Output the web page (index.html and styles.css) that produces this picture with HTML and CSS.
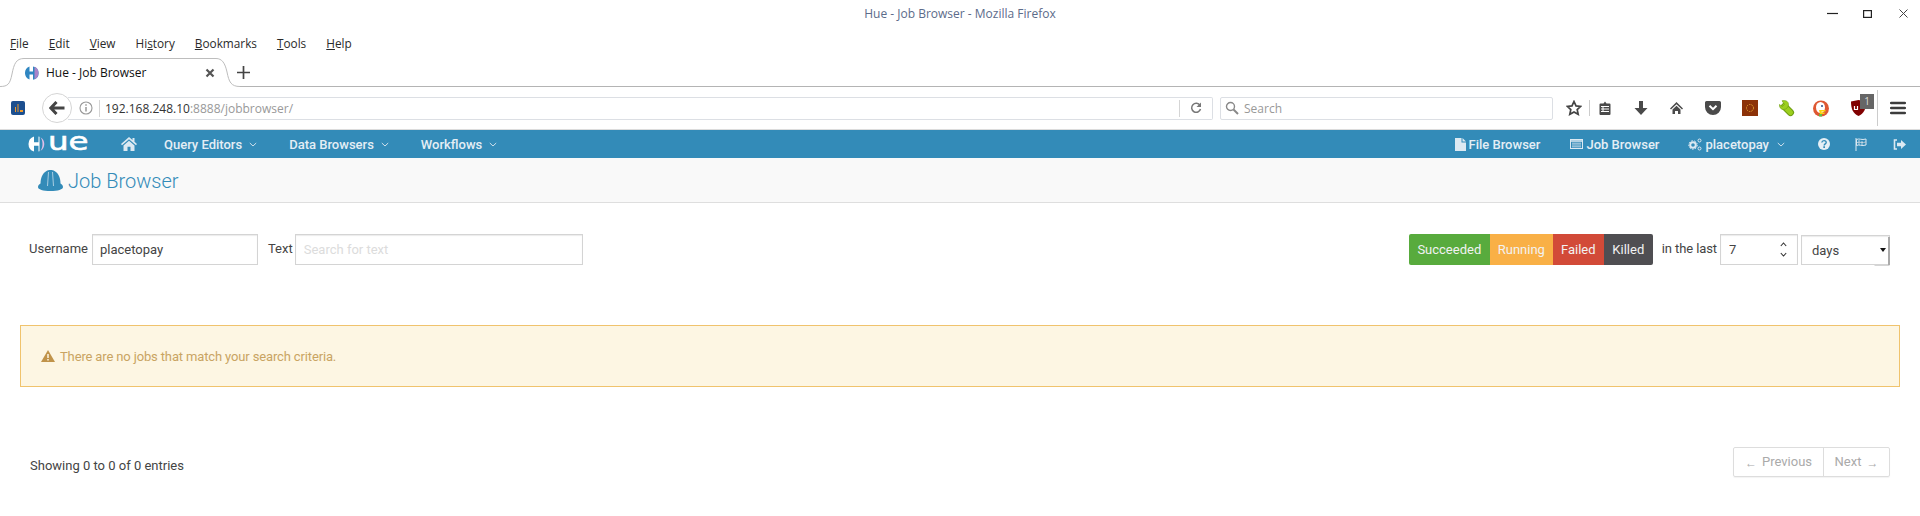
FILE: index.html
```html
<!DOCTYPE html>
<html lang="en">
<head>
<meta charset="utf-8">
<title>Hue - Job Browser</title>
<link rel="stylesheet" href="styles.css">
</head>
<body>
<header class="browser">
  <div class="titlebar">
    <span class="title">Hue - Job Browser - Mozilla Firefox</span>
    <div class="winctl">
      <svg width="11" height="10" viewBox="0 0 11 10"><path d="M0 4.500h11" stroke="#222" stroke-width="1.200"/></svg>
      <svg width="9" height="8" viewBox="0 0 9 8"><rect x=".6" y=".6" width="7.800" height="6.800" fill="none" stroke="#222" stroke-width="1.200"/></svg>
      <svg width="9" height="9" viewBox="0 0 9 9"><path d="M.5.500l8 8M8.500.500l-8 8" stroke="#444" stroke-width="1"/></svg>
    </div>
  </div>
  <nav class="menubar">
    <span><u>F</u>ile</span><span><u>E</u>dit</span><span><u>V</u>iew</span><span>Hi<u>s</u>tory</span><span><u>B</u>ookmarks</span><span><u>T</u>ools</span><span><u>H</u>elp</span>
  </nav>
  <div class="tabbar">
    <div class="tab">
      <svg class="tabshape" width="240" height="29" viewBox="0 0 240 29"><path d="M0 29V28C8 28 10 26 12 16 14 6 16 .5 24 .5H216C222 .5 225 5 227 14 229 24 231 28 240 28V29z" fill="#fff"/><path d="M0 28.500C8 28.500 10 26 12 16 14 6 16 .5 24 .5H216C222 .5 225 5 227 14 229 24 231 28.500 240 28.500" fill="none" stroke="#bdbdbd"/></svg>
      <svg class="favicon" width="16" height="16" viewBox="0 0 16 16"><path d="M5.500 1.600A6.800 6.800 0 0 0 5.500 14.400V9.400h3.500v5.400A6.800 6.800 0 0 0 9 1.400v5H5.500z" fill="#2f86c1"/><path d="M10.500 1.800a6.800 6.800 0 0 1 0 12.400z" fill="#a984c9"/></svg>
      <span class="tabtext">Hue - Job Browser</span>
      <svg width="10" height="10" viewBox="0 0 10 10"><path d="M1.500 1.500l7 7M8.500 1.500l-7 7" stroke="#555" stroke-width="2.200"/></svg>
    </div>
    <svg class="newtab" width="13" height="13" viewBox="0 0 13 13"><path d="M6.500 0v13M0 6.500h13" stroke="#444" stroke-width="1.700"/></svg>
  </div>
  <div class="toolbar">
    <svg class="ext-first" width="14" height="14" viewBox="0 0 14 14"><rect width="14" height="14" rx="2" fill="#1c4f8f"/><path d="M4 11V6h1v5zM6.500 11V3h1v8zM9 11V9h3v2z" fill="#f09a2a"/></svg>
    <div class="urlwrap">
      <div class="back">
        <svg width="16" height="14" viewBox="0 0 16 14"><path d="M7.500 1L1.800 7l5.700 6M2.500 7h13" fill="none" stroke="#444" stroke-width="3"/></svg>
      </div>
      <div class="urlbar">
        <svg width="14" height="14" viewBox="0 0 14 14"><circle cx="7" cy="7" r="6" fill="none" stroke="#999" stroke-width="1.100"/><path d="M7 6v4.500M7 3.300v1.500" stroke="#888" stroke-width="1.300"/></svg>
        <span class="urlsep"></span>
        <span class="url">192.168.248.10<span class="urlmuted">:8888/jobbrowser/</span></span>
        <span class="urlsep reload-sep"></span>
        <svg width="12" height="12" viewBox="0 0 12 12"><path d="M10 3.500A4.500 4.500 0 1 0 10.500 7" fill="none" stroke="#777" stroke-width="1.500"/><path d="M11 .5v4.500H6.500z" fill="#777"/></svg>
      </div>
    </div>
    <div class="searchbar">
      <svg width="14" height="14" viewBox="0 0 14 14"><circle cx="5.500" cy="5.500" r="4" fill="none" stroke="#888" stroke-width="1.400"/><path d="M8.500 8.500l4.500 4.500" stroke="#888" stroke-width="2"/></svg>
      <span>Search</span>
    </div>
    <div class="tools">
      <svg width="16" height="16" viewBox="0 0 16 16"><path d="M8 1.500l2 4.400 4.700.5-3.500 3.200 1 4.700L8 11.900l-4.200 2.400 1-4.700L1.300 6.400 6 5.900z" fill="none" stroke="#444" stroke-width="1.700"/></svg>
      <span class="toolsep"></span>
      <svg class="t-clip" width="14" height="14" viewBox="0 0 12 14"><path d="M1.500 2.500h3L6 .5l1.500 2h3a1 1 0 0 1 1 1V13a1 1 0 0 1-1 1h-9a1 1 0 0 1-1-1V3.500a1 1 0 0 1 1-1z" fill="#4a4a4a"/><path d="M2 5.500h8M2 8h8M2 10.500h8M4 5v6" stroke="#fff" stroke-width="1"/></svg>
      <svg class="t-next wide" width="14" height="14" viewBox="0 0 14 14"><path d="M5 0h4v7h4.500L7 14 .5 7H5z" fill="#4a4a4a"/></svg>
      <svg class="t-next" width="15" height="14" viewBox="0 0 14 14"><path d="M7 1L.5 7.500 1.500 8.500 7 3.200l5.500 5.300 1-1zM3 8.500L7 4.800l4 3.700V13H8.500V10h-3v3H3z" fill="#4a4a4a"/></svg>
      <svg class="t-next" width="16" height="14" viewBox="0 0 16 14"><path d="M1.500 0h13A1.500 1.500 0 0 1 16 1.500V6A8 8 0 0 1 0 6V1.500A1.500 1.500 0 0 1 1.500 0z" fill="#4a4a4a"/><path d="M4.500 4.800L8 8.200l3.500-3.400" fill="none" stroke="#fff" stroke-width="2"/></svg>
      <svg class="t-next" width="16" height="16" viewBox="0 0 16 16"><rect width="16" height="16" fill="#8c3208"/><circle cx="8" cy="8" r="3.500" fill="none" stroke="#e0a030" stroke-width="1" stroke-dasharray="1.500 1"/></svg>
      <svg class="t-next" width="17" height="17" viewBox="0 0 17 17"><path d="M5.500 6.500l6 6" stroke="#6f9e12" stroke-width="7" stroke-linecap="round"/><path d="M5.500 6.500l6 6" stroke="#9ccf1e" stroke-width="5" stroke-linecap="round"/><path d="M3 .8C6 0 9.500 1 9.500 4.500c0 2.500-2 5-5 5C2 9.500.3 7.500.3 4.500L3.500 6.500 5.500 4.500z" fill="#9ccf1e" stroke="#6f9e12" stroke-width=".6"/></svg>
      <svg class="t-next duck" width="16" height="17" viewBox="0 0 16 17"><circle cx="8" cy="8.500" r="8" fill="#de5833"/><ellipse cx="7.500" cy="7.500" rx="4.500" ry="5.500" fill="#fff"/><circle cx="9" cy="6" r="1" fill="#2d4f8e"/><path d="M6 10h6.500v1.500H8.500v1h3V14H7z" fill="#fdd20a"/><path d="M6 14h3v2.500H6z" fill="#65bc46"/></svg>
      <div class="ublock">
        <svg width="15" height="16" viewBox="0 0 15 16"><path d="M0 1.500L7.500 0 15 1.500C15 9 13 13.500 7.500 16 2 13.500 0 9 0 1.500z" fill="#800000"/><path d="M3.500 6v3.500h3V6" fill="none" stroke="#fff" stroke-width="1.200"/></svg>
        <span class="ubadge">1</span>
      </div>
      <span class="toolsep tall"></span>
      <svg class="t-menu" width="16" height="14" viewBox="0 0 16 14"><path d="M1.200 2h13.600M1.200 7h13.600M1.200 12h13.600" stroke="#3c3c3c" stroke-width="2.600" stroke-linecap="round"/></svg>
    </div>
  </div>
</header>

<nav class="hue-nav">
  <div class="logo">
    <svg width="19" height="16" viewBox="0 0 19 16"><path d="M6 .4A8 8 0 0 0 6 15.600V9.800h4.500v5.800c.7-.2 1-.4 1-.4V.8s-.3-.2-1-.4V6.200H6z" fill="#fff"/><path d="M12.500 1.200a8 8 0 0 1 0 13.600c1.500-2 2-4.400 2-6.800s-.5-4.800-2-6.800z" fill="#e0bde8"/></svg>
    <span class="logotext">ue</span>
  </div>
  <svg class="nav-home" width="16" height="14" viewBox="0 0 16 14"><path d="M8 0L0 7l1 1.200L8 2.200l7 6 1-1.200-2.500-2.200V1h-2v2zM2.500 8.500L8 3.700l5.500 4.800V14H9.500V9.800h-3V14h-4z" fill="#dce9f2"/></svg>
  <a class="nav-item first">Query Editors<svg class="chev" width="8" height="5" viewBox="0 0 8 5"><path d="M.8 1l3.200 3 3.200-3" fill="none" stroke="#cfe0ec" stroke-width="1"/></svg></a>
  <a class="nav-item">Data Browsers<svg class="chev" width="8" height="5" viewBox="0 0 8 5"><path d="M.8 1l3.200 3 3.200-3" fill="none" stroke="#cfe0ec" stroke-width="1"/></svg></a>
  <a class="nav-item">Workflows<svg class="chev" width="8" height="5" viewBox="0 0 8 5"><path d="M.8 1l3.200 3 3.200-3" fill="none" stroke="#cfe0ec" stroke-width="1"/></svg></a>
  <div class="nav-right">
    <a class="nav-r"><svg width="11" height="13" viewBox="0 0 11 13"><path d="M0 0h6.500v4.500H11V13H0zM7.500 0L11 3.500H7.500z" fill="#dce9f2"/></svg>File Browser</a>
    <a class="nav-r r-job"><svg width="13" height="10" viewBox="0 0 13 10"><rect x=".5" y=".5" width="12" height="9" fill="none" stroke="#dce9f2"/><path d="M.5 2h12" stroke="#dce9f2" stroke-width="1.500"/><path d="M2 4.200h9M2 6h9M2 7.800h9" stroke="#dce9f2" stroke-width=".8"/></svg>Job Browser</a>
    <a class="nav-r r-user"><svg width="14" height="13" viewBox="0 0 14 13"><circle cx="5" cy="7" r="2.800" fill="none" stroke="#dce9f2" stroke-width="2"/><circle cx="5" cy="7" r="4.300" fill="none" stroke="#dce9f2" stroke-width="1" stroke-dasharray="1.500 1.500"/><circle cx="11.500" cy="2.500" r="1.500" fill="none" stroke="#dce9f2"/><circle cx="11.500" cy="10.500" r="1.500" fill="none" stroke="#dce9f2"/></svg>placetopay<svg class="chev wide" width="8" height="5" viewBox="0 0 8 5"><path d="M.8 1l3.200 3 3.200-3" fill="none" stroke="#cfe0ec" stroke-width="1"/></svg></a>
    <svg class="r-help" width="12" height="12" viewBox="0 0 12 12"><circle cx="6" cy="6" r="6" fill="#e6eff5"/><path d="M3.800 4.500C4 3 5 2.600 6 2.600c1.300 0 2.200.8 2.200 1.800 0 1.500-2 1.500-2 3" fill="none" stroke="#338bb8" stroke-width="1.400"/><path d="M5.300 8.300h1.700V10H5.300z" fill="#338bb8"/></svg>
    <svg class="r-flag" width="13" height="13" viewBox="0 0 13 13"><path d="M1 0v13" stroke="#dce9f2"/><path d="M1.500 1.500c3-1.500 5 1 9.500-.5V7c-4.500 1.500-6.500-1-9.500.5z" fill="none" stroke="#dce9f2"/><path d="M4 2v5M7 3v4.500M2 4.500c3-1 5 1 9-.5" stroke="#dce9f2" stroke-width=".8"/></svg>
    <svg class="r-out" width="13" height="11" viewBox="0 0 13 11"><path d="M4 1H1.500v9H4" fill="none" stroke="#dce9f2" stroke-width="1.600"/><path d="M4 3.800h4V1l5 4.500L8 10V7.200H4z" fill="#dce9f2"/></svg>
  </div>
</nav>

<div class="subhead">
  <svg width="25" height="21" viewBox="0 0 25 21"><path d="M12.500 0c-1.500 0-3 .3-4 1C4.500 3 2.500 8 2.500 13.500 1 14.500 0 15.500 0 17c0 2.500 5 4 12.500 4S25 19.500 25 17c0-1.500-1-2.500-2.500-3.500C22.500 8 20.500 3 16.500 1c-1-.7-2.500-1-4-1z" fill="#338bb8"/><path d="M10.500 2L9.500 16M14.500 2l1 14" stroke="#b5d5e6" stroke-width=".9" fill="none"/></svg>
  <h1>Job Browser</h1>
</div>

<main class="content">
  <form class="filters">
    <div class="filter-left">
      <label class="lbl">Username</label>
      <input class="field user" type="text" value="placetopay">
      <label class="lbl text-lbl">Text</label>
      <input class="field text" type="text" placeholder="Search for text">
    </div>
    <div class="filter-right">
      <div class="btn-group">
        <span class="btn green">Succeeded</span><span class="btn orange">Running</span><span class="btn red">Failed</span><span class="btn dark">Killed</span>
      </div>
      <span class="lbl last">in the last</span>
      <div class="numwrap">
        <input class="field num" type="text" value="7">
        <svg class="spin" width="7" height="15" viewBox="0 0 7 15"><path d="M.8 4L3.500 1 6.200 4M.8 11l2.700 3 2.700-3" fill="none" stroke="#333" stroke-width="1.100"/></svg>
      </div>
      <div class="selwrap">
        <select class="field sel"><option>days</option></select>
      </div>
    </div>
  </form>

  <div class="alert">
    <svg width="14" height="12" viewBox="0 0 14 12"><path d="M7 0L14 12H0z" fill="#c0934a"/><path d="M7 4v4M7 9v1.500" stroke="#fdf6e3" stroke-width="1.500"/></svg>
    <span>There are no jobs that match your search criteria.</span>
  </div>

  <div class="footer">
    <span class="showing">Showing 0 to 0 of 0 entries</span>
    <div class="pager">
      <span class="pg prev"><span class="arrow">←</span> Previous</span><span class="pg next">Next <span class="arrow">→</span></span>
    </div>
  </div>
</main>
</body>
</html>
```

FILE: styles.css
```css
* { box-sizing: border-box; }
html, body { margin: 0; padding: 0; height: 516px; overflow: hidden; background: #fff; }
body { font-family: Roboto, "Liberation Sans", sans-serif; font-size: 13px; color: #444; }

.browser { font-family: "Open Sans", "Noto Sans", sans-serif; font-size: 12px; color: #222; }

.titlebar { height: 26px; display: flex; align-items: center; justify-content: center; position: relative; }
.title { color: #5c6b8a; font-size: 12px; }
.winctl { position: absolute; left: 1827px; top: 9px; display: flex; align-items: flex-start; }
.winctl svg { display: block; }
.winctl svg:nth-child(2) { margin: 1px 0 0 25px; }
.winctl svg:nth-child(3) { margin-left: 27px; }

.menubar { height: 32px; display: flex; align-items: center; padding: 2px 0 0 10px; gap: 20px; font-size: 11.800px; color: #2a2a2a; }

.tabbar { height: 29px; display: flex; align-items: center; border-bottom: 1px solid #b4b4b4; }
.tab { width: 240px; height: 29px; position: relative; isolation: isolate; flex: none; display: flex; align-items: center; padding: 0 25px 0 24px; margin-top: 1px; }
.tabshape { position: absolute; left: 0; top: 0; z-index: -1; }
.favicon { flex: none; }
.tabtext { margin-left: 6px; flex: 1; font-size: 12px; color: #111; }
.newtab { margin-left: -3px; }

.toolbar { height: 43px; display: flex; align-items: center; border-bottom: 1px solid #dcdcdc; padding-left: 11px; }
.ext-first { flex: none; }
.urlwrap { display: flex; align-items: center; margin-left: 17px; width: 1171px; flex: none; }
.back { width: 30px; height: 30px; border-radius: 50%; border: 1px solid #d5d5d5; background: #fff; display: flex; align-items: center; justify-content: center; flex: none; position: relative; z-index: 1; }
.urlbar { flex: 1; height: 23px; margin-left: -4px; border: 1px solid #dcdfe4; border-left: 0; border-radius: 0 2px 2px 0; display: flex; align-items: center; padding: 0 10px 0 11px; }
.urlsep { width: 1px; height: 17px; background: #d5d5d5; margin: 0 5px 0 6px; }
.url { flex: 1; font-size: 12px; color: #333; }
.urlmuted { color: #999; }
.reload-sep { margin: 0 10px 0 0; }
.searchbar { width: 333px; height: 23px; margin-left: 7px; border: 1px solid #dcdfe4; border-radius: 2px; display: flex; align-items: center; padding-left: 4px; gap: 5px; color: #999; font-size: 12px; flex: none; }
.tools { display: flex; align-items: center; margin-left: 13px; flex: 1; height: 42px; }
.tools svg { flex: none; }
.toolsep { width: 1px; height: 16px; background: #ccc; margin-left: 7px; }
.toolsep.tall { height: 36px; margin-left: 11px; }
.t-clip { margin-left: 8px; }
.t-next { margin-left: 21px; }
.t-next.wide { margin-left: 22px; }
.t-next.duck { margin-left: 17px; }
.ublock { margin-left: 22px; display: flex; position: relative; }
.ubadge { position: absolute; left: 9px; top: -6px; width: 14px; height: 15px; background: #666; color: #ddd; font-size: 10px; line-height: 15px; text-align: center; }
.t-menu { margin-left: 12px; }

.hue-nav { height: 28px; background: #338bb8; display: flex; align-items: center; color: #e4eef5; font-weight: 500; font-size: 13px; padding-left: 28px; }
.logo { display: flex; align-items: center; width: 60px; height: 28px; overflow: visible; }
.logotext { font-family: "DejaVu Sans", sans-serif; font-weight: 400; font-size: 25px; line-height: 28px; height: 28px; color: #fff; -webkit-text-stroke: .6px #fff; transform: scaleX(1.300); transform-origin: left center; margin: -4px 0 0 1px; }
.nav-home { margin-left: 33px; flex: none; }
.nav-item { display: flex; align-items: center; margin-left: 32px; }
.nav-item.first { margin-left: 27px; }
.chev { margin-left: 7px; }
.chev.wide { margin-left: 8px; }
.nav-right { margin-left: auto; display: flex; align-items: center; padding-right: 14px; }
.nav-r { display: flex; align-items: center; }
.nav-r svg:first-child { margin-right: 3px; }
.r-job { margin-left: 30px; }
.r-user { margin-left: 29px; }
.r-help { margin-left: 33px; }
.r-flag { margin-left: 25px; }
.r-out { margin-left: 25px; }

.subhead { height: 45px; background: #f9f9f9; border-bottom: 1px solid #dedede; display: flex; align-items: center; padding-left: 38px; gap: 5px; }
.subhead h1 { margin: 0; padding-top: 2px; font-size: 20px; font-weight: 300; color: #338bb8; font-family: Roboto, sans-serif; }

.content { padding: 31px 20px 0; }
.filters { display: flex; justify-content: space-between; align-items: flex-start; padding: 0 10px 0 9px; height: 31px; }
.filter-left, .filter-right { display: flex; align-items: center; height: 31px; }
.lbl { color: #444; font-size: 13px; position: relative; top: -1px; }
.field { height: 31px; border: 1px solid #d4d4d4; background: #fff; font-family: Roboto, sans-serif; font-size: 13px; color: #444; padding: 0 8px; border-radius: 0; outline: 0; box-shadow: inset 0 1px 1px rgba(0,0,0,.08); }
.field::placeholder { color: #dcdcdc; opacity: 1; }
.user { width: 166px; margin-left: 4px; padding-left: 7px; }
.text-lbl { margin-left: 10px; }
.text { width: 288px; margin-left: 2px; }
.btn-group { display: flex; }
.btn { height: 31px; line-height: 31px; color: #f2f2f2; font-size: 13px; text-align: center; }
.green { width: 81px; background: #58ab3d; border-radius: 2px 0 0 2px; }
.orange { width: 63px; background: #f9b046; }
.red { width: 51px; background: #d24a38; }
.dark { width: 49px; background: #4f4e52; border-radius: 0 2px 2px 0; }
.last { margin-left: 9px; letter-spacing: -.1px; }
.numwrap { position: relative; margin-left: 3px; display: flex; }
.num { width: 78px; }
.spin { position: absolute; right: 11px; top: 8px; }
.selwrap { position: relative; margin-left: 3px; display: flex; align-self: flex-end; }
.selwrap::before { content: ""; position: absolute; right: 0; bottom: 0; width: 14px; height: 28px; border-right: 2px solid #aaa; box-shadow: 0 1px 0 -0.5px #aaa; }
.selwrap::after { content: ""; position: absolute; right: 4px; top: 13px; border: 3.500px solid transparent; border-top: 4px solid #111; border-bottom: 0; }
.sel { width: 89px; height: 30px; padding: 0 0 0 10px; appearance: none; -webkit-appearance: none; color: #444; }

.alert { margin-top: 60px; height: 62px; border: 1px solid #f0c36d; background: #fdf6e3; display: flex; align-items: center; padding-left: 20px; gap: 5px; color: #c9a462; font-size: 13px; letter-spacing: -.14px; }

.footer { display: flex; justify-content: space-between; align-items: flex-start; margin-top: 60px; padding: 0 10px 0 10px; height: 30px; }
.showing { color: #444; font-size: 13px; padding-top: 11px; }
.pager { display: flex; height: 30px; width: 157px; border: 1px solid #ddd; border-radius: 2px; box-shadow: 0 1px 1px rgba(0,0,0,.05); color: #aaa; font-size: 13px; }
.pg { display: flex; align-items: center; justify-content: center; gap: 5px; padding-bottom: 2px; }
.arrow { font-family: "Liberation Sans", sans-serif; font-size: 12px; position: relative; top: 2px; }
.prev { width: 90px; border-right: 1px solid #ddd; }
.next { flex: 1; }
```
